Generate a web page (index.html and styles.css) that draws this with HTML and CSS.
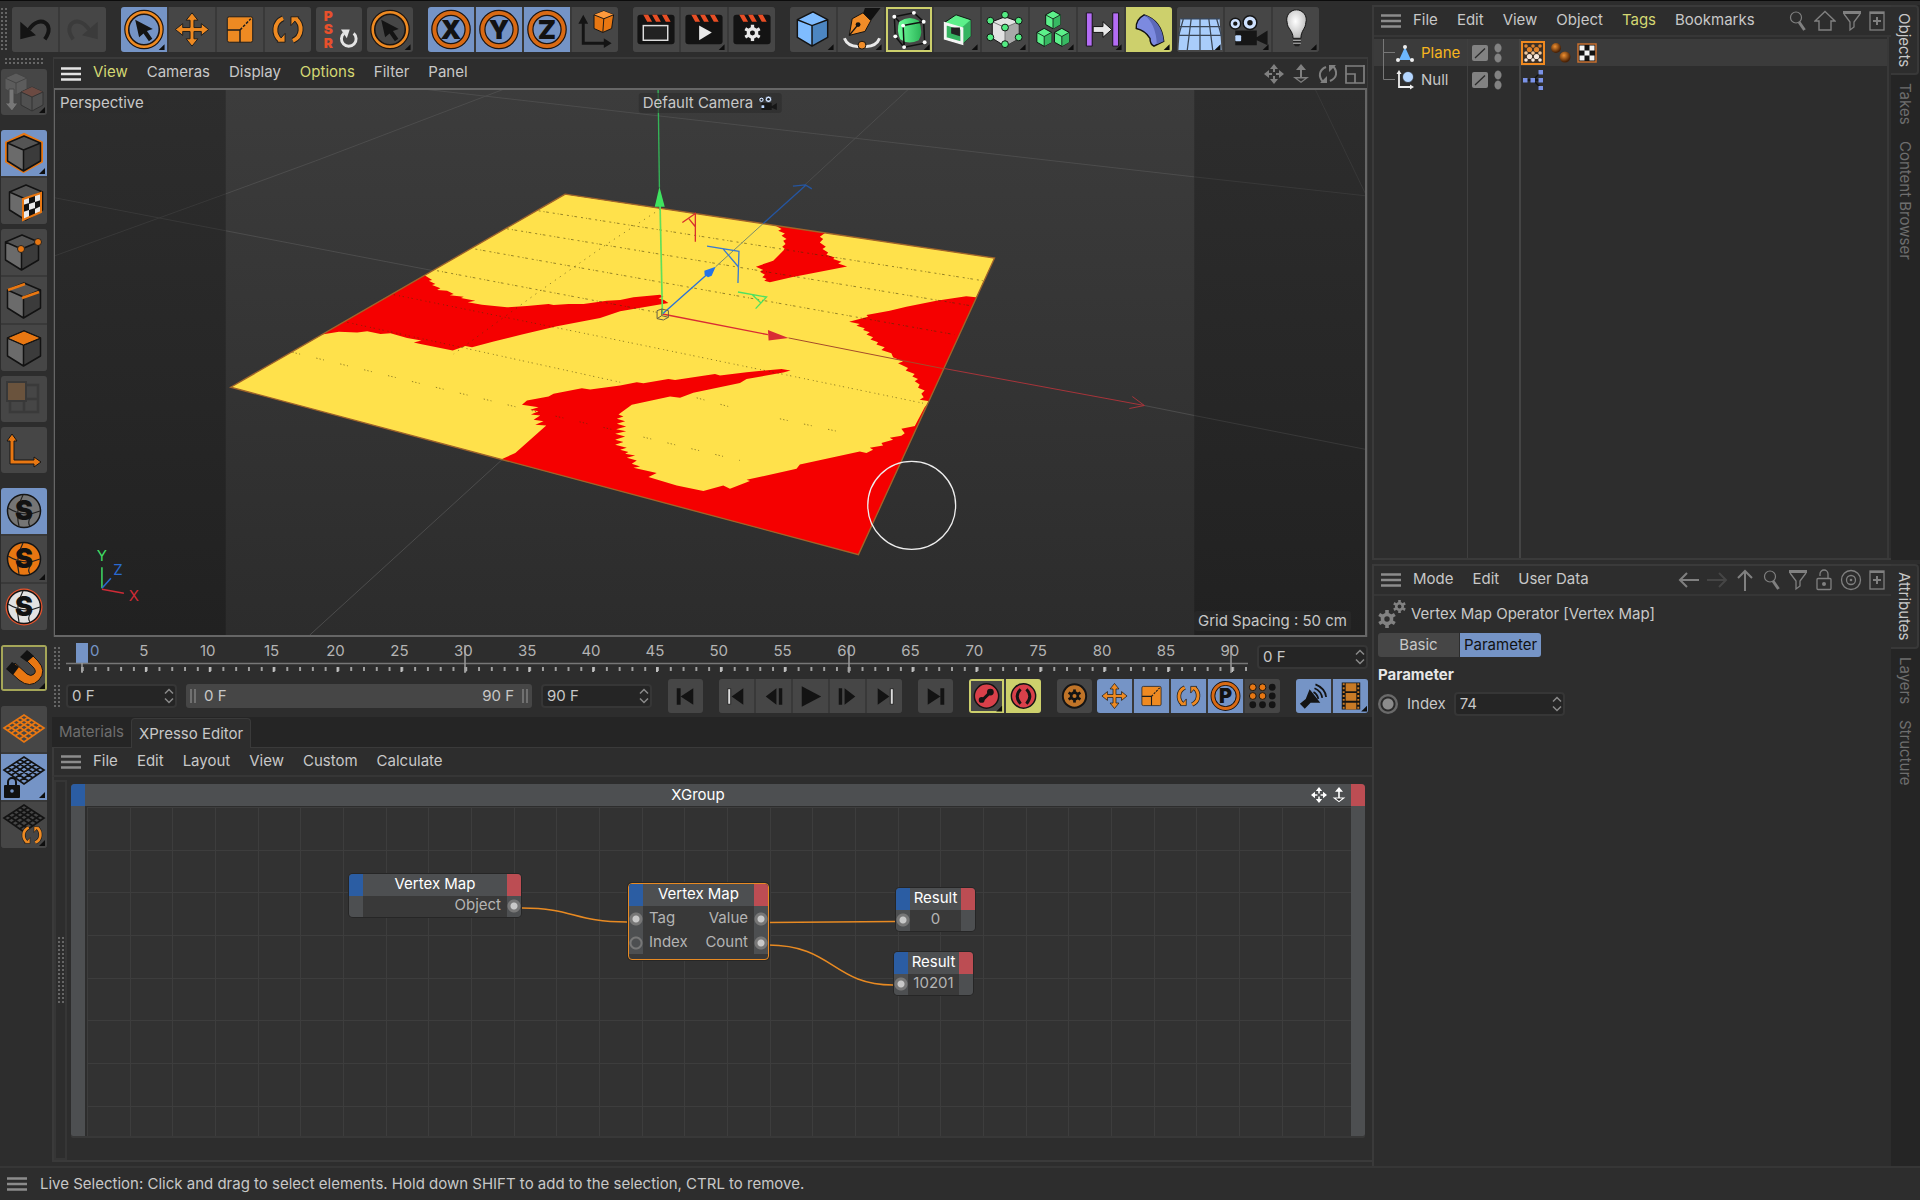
FILE: index.html
```html
<!DOCTYPE html>
<html lang="en">
<head>
<meta charset="utf-8">
<title>XPresso Editor</title>
<link rel="stylesheet" href="styles.css">
</head>
<body>
<svg class="defs" aria-hidden="true">
  <defs>
    <linearGradient id="gMid" x1="0" y1="0" x2="0" y2="1"><stop offset="0" stop-color="#3c3c3c"/><stop offset="1" stop-color="#2c2c2c"/></linearGradient>
    <linearGradient id="gSide" x1="0" y1="0" x2="0" y2="1"><stop offset="0" stop-color="#2d2d2d"/><stop offset="1" stop-color="#212121"/></linearGradient>
    <radialGradient id="gBall" cx=".4" cy=".35" r=".6"><stop offset="0" stop-color="#f09030"/><stop offset="1" stop-color="#4a2206"/></radialGradient>
    <radialGradient id="gBulb" cx=".45" cy=".4" r=".6"><stop offset="0" stop-color="#fff"/><stop offset="1" stop-color="#bbb"/></radialGradient>
    <linearGradient id="gGreen"><stop offset="0" stop-color="#6fff9c"/><stop offset="1" stop-color="#2cb558"/></linearGradient>
  </defs>
  <symbol id="burger" viewBox="0 0 20 14"><path d="M0 1.500h20M0 7h20M0 12.500h20" stroke="currentColor" stroke-width="2.600"/></symbol>
  <symbol id="corner" viewBox="0 0 46 46"><path d="M44 38v6h-6z" fill="#0e0e0e"/></symbol>
  <symbol id="spin" viewBox="0 0 10 16"><path d="M1 5.500L5 1.500L9 5.500M1 10.500L5 14.500L9 10.500" fill="none" stroke="#8a8a8a" stroke-width="1.500"/></symbol>
  <symbol id="ring" viewBox="0 0 46 46"><circle cx="23" cy="23" r="17.500" fill="none" stroke="#1c1410" stroke-width="5.400"/><circle cx="23" cy="23" r="17.700" fill="none" stroke="#ee8a22" stroke-width="2.600"/></symbol>
  <symbol id="ring2" viewBox="0 0 46 46"><circle cx="23" cy="23" r="17" fill="none" stroke="#1c1410" stroke-width="6.500"/><circle cx="23" cy="23" r="17" fill="none" stroke="#d96a14" stroke-width="4"/></symbol>
  <symbol id="pointer" viewBox="0 0 46 46"><path d="M14 13L32 22.500L26 24.500L31.500 32.500L28 35L22.500 27L18 31z" fill="#141414"/></symbol>
  <symbol id="move" viewBox="0 0 46 46"><path d="M23 6L29 13.500H25V21H32.500V17L40 23L32.500 29V25H25V32.500H29L23 40L17 32.500H21V25H13.500V29L6 23L13.500 17V21H21V13.500H17z" fill="#ee8a22" stroke="#1d1d1d"/></symbol>
  <symbol id="scale" viewBox="0 0 46 46"><rect x="10" y="10" width="26" height="26" rx="2" fill="#ee8a22" stroke="#1d1d1d"/><path d="M10 23.500h13V36" fill="none" stroke="#1d1d1d" stroke-width="1.500"/><path d="M23 23.500L34 12" stroke="#1d1d1d" stroke-width="1.500" stroke-dasharray="3 1.500"/></symbol>
  <symbol id="rotate" viewBox="0 0 46 46"><path d="M15 34C8 28 8 16 18 11.500M31 12C38 18 38 30 28 34.500" fill="none" stroke="#1d1d1d" stroke-width="6"/><path d="M12 36H20V27zM34 10H26V19z" fill="#ee8a22" stroke="#1d1d1d"/><path d="M15 34C8 28 8 16 18 11.500M31 12C38 18 38 30 28 34.500" fill="none" stroke="#ee8a22" stroke-width="4"/></symbol>
  <symbol id="cube" viewBox="0 0 46 46"><path d="M6.500 13L22.500 20V41L6.500 31z" fill="#6b6b6b"/><path d="M22.500 20L39.500 13V31L22.500 41z" fill="#3b3b3b"/><path d="M6.500 13L23 6L39.500 13L22.500 20z" fill="#545454"/><path d="M6.500 13L23 6L39.500 13V31L22.500 41L6.500 31zM6.500 13L22.500 20L39.500 13M22.500 20V41" fill="none" stroke="#121212" stroke-width="1.500" stroke-linejoin="round"/></symbol>
  <symbol id="gcube" viewBox="0 0 20 24"><path d="M1 6L10 1L19 6V18L10 23L1 18z" fill="#5cf08a" stroke="#111" stroke-width="1.200"/><path d="M10 11L19 6V18L10 23z" fill="#37b862"/><path d="M1 6L10 11L19 6M10 11V23" stroke="#111" fill="none"/></symbol>
  <symbol id="clap" viewBox="0 0 46 46"><rect x="4" y="8" width="38" height="30" rx="3" fill="#131313"/><path d="M10 8h5l4 7h-5zM19 8h5l4 7h-5zM29 8h5l4 7h-5z" fill="#e84e25"/></symbol>
  <symbol id="ball" viewBox="0 0 46 46"><circle cx="23" cy="23" r="16.500" fill="currentColor" stroke="#151515" stroke-width="1.500"/><path d="M7 20Q23 30 39 23M22 7Q14 22 18 38M30 29Q26 34 29 38" fill="none" stroke="#222" stroke-width="1.200"/></symbol>
  <symbol id="mesh" viewBox="0 0 46 32"><path d="M2 15L22 2L42 15L22 29zM6 12.500L26.500 26M10.500 9.500L31 23M14.500 7L35 20M18 4.500L38.500 17.500M38 12.500L17.500 26M33.500 9.500L13 23M29.500 7L9.500 20M26 4.500L5.500 17.500" fill="none" stroke="currentColor" stroke-width="1.700"/></symbol>
  <symbol id="first" viewBox="0 0 36 34"><path d="M9 9h4v17H9zM26 9v17L13 17.500z" fill="#131313"/></symbol>
  <symbol id="keyprev" viewBox="0 0 36 34"><path d="M25 9v17L13 17.500z" fill="#131313"/><path d="M9 9.500h3v16H9z" fill="#ddd" stroke="#131313" stroke-width=".8"/></symbol>
  <symbol id="stepprev" viewBox="0 0 36 34"><path d="M21 9v17L10 17.500zM23.500 9h3.500v17h-3.500z" fill="#131313"/></symbol>
  <symbol id="m-move" viewBox="0 0 20 20"><path d="M10 0l4 5H6zM10 20l4-5H6zM0 10l5-4v8zM20 10l-5-4v8zM9 5h2v3H9zM9 12h2v3H9zM5 9h3v2H5zM12 9h3v2h-3z" fill="currentColor"/></symbol>
  <symbol id="m-dolly" viewBox="0 0 20 20"><path d="M10 0l5 6h-4v7h7l-8 6l-8-6h7V6H5z" fill="currentColor"/><path d="M6 14.500h8l-4 3z" fill="#2d2d2d"/></symbol>
  <symbol id="search" viewBox="0 0 20 22"><circle cx="8" cy="7.500" r="5.500" fill="none" stroke="currentColor" stroke-width="1.200"/><path d="M11 12L16.500 20" stroke="currentColor" stroke-width="3"/></symbol>
  <symbol id="funnel" viewBox="0 0 20 22"><path d="M1 2.500h18" stroke="currentColor" stroke-width="3"/><path d="M2 4l6 8v8l4-3v-5l6-8" fill="none" stroke="currentColor" stroke-width="1.300"/></symbol>
  <symbol id="plus" viewBox="0 0 18 22"><rect x="2" y="2" width="14" height="18" fill="none" stroke="currentColor" stroke-width="1.300"/><path d="M9 7v8M5 11h8M2 3h14" stroke="currentColor" stroke-width="2"/></symbol>
  <symbol id="slot" viewBox="0 0 16 16"><rect width="16" height="16" rx="2" fill="#828282"/><path d="M3 13L13 3.500" stroke="#2a2a2a" stroke-width="1.300"/></symbol>
  <symbol id="gear" viewBox="0 0 20 20"><circle cx="10" cy="10" r="5" fill="none" stroke="currentColor" stroke-width="4"/><path d="M10 0v4M10 16v4M1.300 5l3.500 2M15.200 13l3.500 2M1.300 15l3.500-2M15.200 7l3.500-2" stroke="currentColor" stroke-width="4"/></symbol>
  <symbol id="camera" viewBox="0 0 46 46"><path d="M10 24h22v15H10zM32 31l11-7v15l-11-5z" fill="#161616"/><circle cx="10" cy="17" r="5.500" fill="#cfe2ff" stroke="#161616" stroke-width="1.500"/><circle cx="25" cy="16" r="7" fill="#cfe2ff" stroke="#161616" stroke-width="1.500"/><circle cx="10" cy="17" r="2.200" fill="#161616"/><circle cx="25" cy="16" r="2.800" fill="#161616"/><rect x="10" y="29" width="6" height="6" rx="1" fill="#bcd8ff"/></symbol>
</svg>

<div class="app">
 <div class="work">
  <div class="left">
   <header class="toolbar">
    <i class="grip grip-v"></i>
    <div class="group">
     <button class="tool" aria-label="Undo"><svg viewBox="0 0 46 46"><path d="M33 33C45 17 27 7 17 23" fill="none" stroke="#141414" stroke-width="4"/><path d="M8 15V33L24 29z" fill="#141414"/></svg></button>
     <button class="tool" aria-label="Redo"><svg viewBox="0 0 46 46"><path d="M13 33C1 17 19 7 29 23" fill="none" stroke="#3b3b3b" stroke-width="4"/><path d="M38 15V33L22 29z" fill="#3b3b3b"/></svg></button>
    </div>
    <div class="group far">
     <button class="tool on" aria-label="Live Selection"><svg viewBox="0 0 46 46"><use href="#ring"/><use href="#pointer"/><use href="#corner"/></svg></button>
     <button class="tool" aria-label="Move"><svg viewBox="0 0 46 46"><use href="#move"/></svg></button>
     <button class="tool" aria-label="Scale"><svg viewBox="0 0 46 46"><use href="#scale"/></svg></button>
     <button class="tool" aria-label="Rotate"><svg viewBox="0 0 46 46"><use href="#rotate"/></svg></button>
    </div>
    <div class="group">
     <button class="tool" aria-label="Reset PSR"><svg viewBox="0 0 46 46"><g class="psr"><text x="12" y="14">P</text><text x="12" y="28">S</text><text x="12" y="42">R</text></g><path d="M28 27A7.500 7.500 0 1 0 38 27" fill="none" stroke="#e4e4e4" stroke-width="3"/><path d="M25 23h9l-3 9z" fill="#e4e4e4"/></svg></button>
    </div>
    <div class="group">
     <button class="tool" aria-label="Recent tool"><svg viewBox="0 0 46 46"><use href="#ring"/><use href="#pointer"/><use href="#corner"/></svg></button>
    </div>
    <div class="group far">
     <button class="tool on" aria-label="X axis"><svg viewBox="0 0 46 46"><use href="#ring2"/><text class="axis" x="23" y="33">X</text></svg></button>
     <button class="tool on" aria-label="Y axis"><svg viewBox="0 0 46 46"><use href="#ring2"/><text class="axis" x="23" y="33">Y</text></svg></button>
     <button class="tool on" aria-label="Z axis"><svg viewBox="0 0 46 46"><use href="#ring2"/><text class="axis" x="23" y="33">Z</text></svg></button>
     <button class="tool" aria-label="Coordinate system"><svg viewBox="0 0 46 46"><path d="M11 15V37H33" fill="none" stroke="#141414" stroke-width="3"/><path d="M6 17L11 8L16 17zM32 32L40 37L32 42z" fill="#141414"/><path d="M22 8L32 4L42 8L40 22L31 26L22 22z" fill="#e87712" stroke="#141414"/><path d="M22 8L32 4L42 8L32 12z" fill="#ff9a3c"/><path d="M22 8L32 12L42 8M32 12L31 26" fill="none" stroke="#141414"/></svg></button>
    </div>
    <div class="group far">
     <button class="tool" aria-label="Render view"><svg viewBox="0 0 46 46"><use href="#clap"/><rect x="10" y="19" width="25" height="15" fill="#222" stroke="#ddd" stroke-width="1.500"/></svg></button>
     <button class="tool" aria-label="Render to picture viewer"><svg viewBox="0 0 46 46"><use href="#clap"/><path d="M18 19L31 26L18 34z" fill="#e8e8e8"/><use href="#corner"/></svg></button>
     <button class="tool" aria-label="Render settings"><svg viewBox="0 0 46 46"><use href="#clap"/><use class="lit" href="#gear" x="15" y="18" width="17" height="17"/></svg></button>
    </div>
    <div class="group far">
     <button class="tool" aria-label="Cube"><svg viewBox="0 0 46 46"><path d="M7 13L23 5L38 13V31L22 40L7 31z" fill="#7fbcff"/><path d="M22 19L38 13V31L22 40z" fill="#4c86c2"/><path d="M7 13L23 5L38 13V31L22 40L7 31zM7 13L22 19L38 13M22 19V40" fill="none" stroke="#131313" stroke-width="1.500"/><use href="#corner"/></svg></button>
     <button class="tool" aria-label="Pen"><svg viewBox="0 0 46 46"><path d="M27 1H43L33 14L25 7z" fill="#111"/><path d="M11 29L14 12L25 6L33 14L27 25z" fill="#f08c28" stroke="#111"/><circle cx="20" cy="18" r="2.500" fill="#111"/><path d="M11 29L20 18" stroke="#111" stroke-width="1.500"/><path d="M6 32Q10 42 24 40Q38 42 42 32" fill="none" stroke="#e8e8e8" stroke-width="3"/><circle cx="24" cy="39" r="4" fill="#f08c28" stroke="#111"/><use href="#corner"/></svg></button>
     <button class="tool outlined" aria-label="Subdivision surface"><svg viewBox="0 0 46 46"><path d="M8 10L28 6L38 15L39 37L18 41L9 30zM8 10L17 19L38 15M17 19L18 41" fill="none" stroke="#111" stroke-width="1.500"/><path d="M13 15Q23 8 33 14Q38 26 33 34Q22 39 14 33Q10 24 13 15z" fill="url(#gGreen)"/><path d="M17 19L18 41M17 19L38 15" stroke="#111" stroke-width="1.500"/><g fill="#fff"><circle cx="8" cy="10" r="2"/><circle cx="28" cy="6" r="2"/><circle cx="17" cy="19" r="2"/><circle cx="38" cy="15" r="2"/><circle cx="39" cy="36" r="2"/><circle cx="18" cy="41" r="2"/><circle cx="9" cy="30" r="2"/></g><use href="#corner"/></svg></button>
     <button class="tool" aria-label="Extrude"><svg viewBox="0 0 46 46"><path d="M10 16L22 8L37 13V30L28 38L10 33z" fill="#5cf08a" stroke="#111"/><path d="M28 21L37 13V30L28 38z" fill="#35b360"/><path d="M11 17L28 22V37L11 32z" fill="#35b360" stroke="#f4f4f4" stroke-width="3"/><path d="M17 21h9v9l-9-3z" fill="#222"/><use href="#corner"/></svg></button>
     <button class="tool" aria-label="Cloner"><svg viewBox="0 0 46 46"><path d="M10 15L23 10L37 15V32L23 40L10 32z" fill="#e2e2e2" stroke="#111"/><path d="M23 21L37 15V32L23 40z" fill="#a9a9a9"/><path d="M10 15L23 21L37 15M23 21V40" fill="none" stroke="#777"/><g fill="#53ec83" stroke="#111"><circle cx="23" cy="8" r="3.500"/><circle cx="8" cy="14" r="3.500"/><circle cx="37" cy="14" r="3.500"/><circle cx="23" cy="21" r="3.500"/><circle cx="8" cy="31" r="3.500"/><circle cx="37" cy="31" r="3.500"/><circle cx="23" cy="38" r="3.500"/></g><use href="#corner"/></svg></button>
     <button class="tool" aria-label="Array"><svg viewBox="0 0 46 46"><use href="#gcube" x="14" y="3" width="18" height="20"/><use href="#gcube" x="5" y="21" width="18" height="20"/><use href="#gcube" x="23" y="21" width="18" height="20"/><use href="#corner"/></svg></button>
     <button class="tool" aria-label="Spacing"><svg viewBox="0 0 46 46"><path d="M8 6h6v34H8zM35 6h6v34h-6z" fill="#b46cf5" stroke="#111"/><path d="M15 20h10v-5l9 8l-9 8v-5H15z" fill="#e8e8e8" stroke="#111"/><use href="#corner"/></svg></button>
     <button class="tool yellow" aria-label="Bend"><svg viewBox="0 0 46 46"><path d="M10 22Q9 13 18 8Q36 14 38 35L28 40Q24 38 24 32Q19 24 10 22z" fill="#7c8ae0" stroke="#111" stroke-width="1.500"/><path d="M18 8Q30 17 31 38L38 35Q36 14 18 8z" fill="#5c69b8"/><use href="#corner"/></svg></button>
    </div>
    <div class="group">
     <button class="tool" aria-label="Floor"><svg viewBox="0 0 46 46"><path d="M3 12H43L45 44H1z" fill="#a9cdfb"/><path d="M3 12H43M2 20H44M2 29H44M23 12V44M14 12L10 44M32 12L36 44M6 12L1 30M40 12L45 30" stroke="#3a4656" stroke-width="1.300"/><use href="#corner"/></svg></button>
     <button class="tool" aria-label="Camera"><svg viewBox="0 0 46 46"><use href="#camera"/><use href="#corner"/></svg></button>
     <button class="tool" aria-label="Light"><svg viewBox="0 0 46 46"><path d="M14 16A10 10 0 1 1 33 16C33 22 28 24 28 32H20C20 24 14 22 14 16z" fill="url(#gBulb)" stroke="#111"/><path d="M20 33h8v4l-2 3h-4l-2-3z" fill="#222"/><path d="M20 34h8M20 37h8" stroke="#ccc"/><use href="#corner"/></svg></button>
    </div>
   </header>

   <div class="stage">
    <nav class="rail" aria-label="Modes">
     <i class="grip grip-h"></i>
     <div class="col"><button class="tool" aria-label="Make editable"><svg viewBox="0 0 46 46"><path d="M4 9L15 4L26 9V20L15 26L4 20z" fill="#5c5c5c" stroke="#444"/><path d="M4 9L15 14L26 9M15 14V26" fill="none" stroke="#444"/><path d="M20 23L31 18L42 23V36L31 42L20 36z" fill="#505050" stroke="#333"/><path d="M20 23L31 18L42 23L31 28z" fill="#6b4a42"/><path d="M31 28V42M20 23L31 28L42 23" fill="none" stroke="#333"/><path d="M8 20h5v14h4l-6 8l-7-8h4z" fill="#777" stroke="#444"/><use href="#corner"/></svg></button></div>
     <div class="col far">
      <button class="tool on" aria-label="Model"><svg viewBox="0 0 46 46"><path d="M6 13L23 5L40 13V31L22.500 41L6 31z" fill="none" stroke="#e87712" stroke-width="4"/><use href="#cube"/><use href="#corner"/></svg></button>
      <button class="tool" aria-label="Texture"><svg viewBox="0 0 46 46"><use href="#cube" x="2" y="1"/><path d="M22 21L40 15V34L22 42z" fill="#e9e9e9"/><path d="M28 19l6-2v7l-6 2zM22 27l6-2v7l-6 2zM34 24l6-2v6l-6 3zM28 32l6-2v7l-6 2z" fill="#111"/><path d="M22 21L40 15V34L22 42z" fill="none" stroke="#e87712" stroke-width="2"/></svg></button>
     </div>
     <div class="col">
      <button class="tool" aria-label="Points"><svg viewBox="0 0 46 46"><use href="#cube" x="-2"/><g fill="#e87712" stroke="#222"><circle cx="20" cy="20" r="3.500"/><circle cx="37" cy="13" r="3.500"/></g></svg></button>
      <button class="tool" aria-label="Edges"><svg viewBox="0 0 46 46"><use href="#cube"/><path d="M7 13L24 7M21 21L38 15" stroke="#e87712" stroke-width="2.500"/></svg></button>
      <button class="tool" aria-label="Polygons"><svg viewBox="0 0 46 46"><use href="#cube"/><path d="M6.500 13L23 6L39.500 13L22.500 20z" fill="#e87712" stroke="#111"/></svg></button>
     </div>
     <div class="col"><button class="tool" aria-label="UV polygons"><svg viewBox="0 0 46 46"><path d="M9 9H37V36H9zM23 9V36M9 23H37" fill="none" stroke="#3a3a3a" stroke-width="2.500"/><rect x="6" y="6" width="19" height="19" fill="#6a533d" stroke="#383838" stroke-width="2"/></svg></button></div>
     <div class="col"><button class="tool" aria-label="Enable axis"><svg viewBox="0 0 46 46"><path d="M11 7L16 14H13V33H33V30L40 35L33 40V37H9V14H6z" fill="#e87712" stroke="#161616"/></svg></button></div>
     <div class="col far">
      <button class="tool on" aria-label="Solo off"><svg class="s-grey" viewBox="0 0 46 46"><use href="#ball"/><text class="axis" x="23" y="32">S</text></svg></button>
      <button class="tool" aria-label="Solo single"><svg class="s-orange" viewBox="0 0 46 46"><use href="#ball"/><text class="axis" x="23" y="32">S</text><use href="#corner"/></svg></button>
      <button class="tool" aria-label="Solo hierarchy"><svg class="s-white" viewBox="0 0 46 46"><circle cx="23" cy="23" r="18.500" fill="#e8532c"/><use href="#ball"/><text class="axis" x="23" y="32">S</text></svg></button>
     </div>
     <div class="col far"><button class="tool outlined dimmed" aria-label="Snap"><svg viewBox="0 0 46 46"><path d="M14 18L26 29Q30 32 33 29Q36 26 32 22L22 12L28 7L37 16Q46 26 38 35Q29 44 18 35L7 25z" fill="#e87712" stroke="#161616"/><path d="M19 12L26 5L33 11L26 17zM5 24L11 17L18 22L12 30z" fill="#121212"/><use href="#corner"/></svg></button></div>
     <div class="col far">
      <button class="tool" aria-label="Workplane"><svg class="s-orange" viewBox="0 0 46 46"><use href="#mesh" x="1" y="7" width="46" height="32"/></svg></button>
      <button class="tool on" aria-label="Lock workplane"><svg class="s-black" viewBox="0 0 46 46"><use href="#mesh" x="1" y="1" width="46" height="32"/><rect x="3" y="31" width="16" height="13" rx="1" fill="#111"/><path d="M7 31v-3a4 4 0 0 1 8 0v3" fill="none" stroke="#111" stroke-width="2"/><circle cx="11" cy="37" r="1.800" fill="#7594c6"/><use href="#corner"/></svg></button>
      <button class="tool" aria-label="Planar workplane"><svg class="s-black" viewBox="0 0 46 46"><use href="#mesh" x="1" y="1" width="46" height="32"/><use href="#rotate" x="16" y="18" width="30" height="30"/><use href="#corner"/></svg></button>
     </div>
    </nav>

    <main class="center">
     <section class="view">
      <div class="menubar view-menu">
       <button class="menu-btn bright" aria-label="Menu"><svg class="burger"><use href="#burger"/></svg></button>
       <button class="mi hot">View</button><button class="mi">Cameras</button><button class="mi">Display</button><button class="mi hot">Options</button><button class="mi">Filter</button><button class="mi">Panel</button>
       <div class="tools-right view-nav">
        <button class="mini" aria-label="Pan"><svg width="20" height="20"><use href="#m-move"/></svg></button>
        <button class="mini" aria-label="Dolly"><svg width="20" height="20"><use href="#m-dolly"/></svg></button>
        <button class="mini" aria-label="Orbit"><svg width="20" height="20" viewBox="0 0 20 20"><path d="M5 18C0 12 1 6 8 3M15 2C20 8 19 14 12 17" fill="none" stroke="currentColor" stroke-width="2"/><path d="M2 19h7v-7zM18 1h-7v7z" fill="currentColor"/></svg></button>
        <button class="mini" aria-label="Toggle view"><svg width="20" height="20" viewBox="0 0 20 20"><path d="M1 2h18M1 1v18h18V1M1 10h9v9" fill="none" stroke="currentColor" stroke-width="1.700"/></svg></button>
       </div>
      </div>
      <div class="viewport">
       <svg class="scene" viewBox="54 89 1312 546" preserveAspectRatio="xMidYMid slice" role="img" aria-label="Perspective view of the plane">
        <rect x="54" y="89" width="1312" height="546" fill="url(#gMid)"/>
        <path d="M54 89H225V635H54zM1195 89H1368V635H1195z" fill="url(#gSide)"/>
        <g stroke="#4c4c4c" fill="none">
         <path d="M225 230L433 270M225 193L315 160L504 88M422 88L1195 176M909 88L805 184M502 459L309 635M1145 405L1195 415"/>
         <path d="M54 197L225 230M54 255L225 193M1195 176L1367 195M1316 88L1367 194M1195 415L1367 449" stroke="#383838"/>
        </g>
        <g transform="translate(220 160) scale(.333333)">
         <clipPath id="pl"><path d="M1035 100L30 680L1916 1183L2325 292z"/></clipPath>
         <g clip-path="url(#pl)">
          <path d="M1035 100L30 680L1916 1183L2325 292z" fill="#ffe14b"/>
          <g fill="#f50000">
           <path d="M560 330L615 345L635 358L625 360L645 370L635 373L660 383L650 388L680 390L700 400L688 404L730 408L722 412L765 420L742 425L785 432L860 440L920 436L985 430L1000 433L1045 430L1090 430L1160 420L1200 418L1240 410L1320 402L1330 408L1315 413L1332 418L1345 427L1200 452L1140 472L1010 497L905 522L820 543L755 560L735 556L697 570L600 550L580 546L603 540L560 532L510 518L480 520L440 512L410 516L355 513L290 524z"/>
           <path d="M1640 180L1685 205L1675 210L1695 218L1685 225L1700 235L1690 240L1697 250L1687 258L1695 265L1660 300L1608 318L1630 328L1620 333L1635 342L1627 350L1640 355L1633 360L1650 365L1715 350L1882 317L1855 308L1865 303L1840 295L1845 290L1820 282L1825 275L1808 265L1818 258L1800 245L1810 235L1800 228L1820 214z"/>
           <path d="M1888 483L1945 468L1940 463L2010 450L2060 438L2150 420L2240 407L2290 412L2120 800L2085 797L2115 740L2130 722L2100 718L2112 710L2105 700L2115 690L2095 682L2100 672L2085 662L2095 655L2078 648L2085 640L2058 630L2065 622L2035 608L2050 603L2020 590L2015 578L1985 568L1995 560L1970 552L1975 545L1952 537L1960 530L1940 522L1950 515L1930 508L1935 503L1910 495L1920 490z"/>
           <path d="M835 900L885 878L978 795L945 793L970 782L940 778L960 765L932 762L955 752L930 748L955 740L905 733L920 720L985 708L1000 700L1085 683L1110 687L1200 675L1250 665L1270 668L1345 655L1365 658L1485 640L1500 645L1580 635L1685 625L1712 630L1690 636L1580 655L1560 667L1420 697L1380 712L1350 708L1235 733L1195 762L1210 768L1190 775L1215 782L1190 790L1218 798L1188 806L1218 812L1185 820L1215 828L1185 838L1210 845L1185 853L1220 862L1200 868L1225 875L1215 880L1245 885L1220 892L1250 900L1235 910L1260 918L1240 922L1310 938L1285 950L1370 975L1450 992L1510 975L1530 985L1590 962L1580 958L1700 932L1730 925L1740 912L1920 873L1940 878L1960 868L1950 862L1990 855L1985 848L2020 838L2010 832L2045 826L2055 818L2045 805L2120 790L1930 1240L1200 1030z"/>
          </g>
          <g fill="none" stroke="#3c3408" stroke-opacity=".55" stroke-width="3">
           <path d="M955 150L2290 360M860 204L2258 436M765 265L2205 522M650 330L1310 455" stroke-dasharray="6 9 3 5 8 12"/>
           <path d="M520 402L1200 540L2110 728M380 485L1200 665" stroke-dasharray="4 12 3 8"/>
           <path d="M215 575L870 735L1180 808M1270 830L1560 900M1680 775L1850 812M1430 712L1540 742" stroke-dasharray="4 6 4 7 3 50"/>
           <path d="M1320 145L1160 250L960 390L700 580" stroke-opacity=".5" stroke-dasharray="4 14"/>
          </g>
         </g>
         <path d="M1035 100L30 680L1916 1183L2325 292z" fill="none" stroke="#a0642a" stroke-width="4"/>
         <path d="M1327 460L1644 522" stroke="#d92c34" stroke-width="4"/><path d="M1644 508L1706 532L1646 540z" fill="#d92c34"/>
         <path d="M1706 532L2175 625" stroke="#a54a2a" stroke-width="3"/>
         <path d="M1327 460L1460 342" stroke="#2a72d8" stroke-width="4"/><path d="M1453 330L1487 318L1475 345L1464 350L1454 343z" fill="#2473e8"/>
         <path d="M1487 318L1630 188" stroke="#7a8c6a" stroke-width="3"/><path d="M1630 188L1757 74M1719 76L1757 72L1776 84" fill="none" stroke="#2555a0" stroke-width="4"/>
         <path d="M1327 460L1320 135" stroke="#5fe05a" stroke-width="5"/><path d="M1304 138L1318 78L1334 138z" fill="#3fe35f"/><path d="M1318 80L1314 -220" stroke="#35b558" stroke-width="4"/>
         <path d="M1311 450L1325 445L1345 450V470L1330 478L1311 474zM1325 445V465L1311 474M1325 465L1345 470" fill="none" stroke="#666045" stroke-width="3"/>
         <path d="M1426 243V158L1387 185M1426 198L1407 174" fill="none" stroke="#d8302c" stroke-width="4"/>
         <path d="M1554 367L1557 272L1461 256M1510 265L1555 318" fill="none" stroke="#3a7ad0" stroke-width="4"/>
         <path d="M1554 394L1640 409L1607 444M1597 402L1624 428" fill="none" stroke="#4fe060" stroke-width="4"/>
        </g>
        <path d="M945 368L1145 405M1133 396L1145 405L1130 408" fill="none" stroke="#a8343a"/>
        <circle cx="912" cy="505" r="44" fill="none" stroke="#eee" stroke-width="1.300"/>
        <g class="gizmo" fill="none"><path d="M101 588V567" stroke="#3fdc63" stroke-width="1.500"/><path d="M101 588L110 578" stroke="#2a6ad0" stroke-width="1.500"/><path d="M101 589L123 593" stroke="#cf2b36" stroke-width="1.500"/><text x="101" y="561" fill="#3fdc63">Y</text><text x="117" y="575" fill="#2a6ad0">Z</text><text x="133" y="601" fill="#cf2b36">X</text></g>
       </svg>
       <span class="tag tag-left">Perspective</span>
       <span class="tag tag-mid">Default Camera <svg width="20" height="18" viewBox="2 7 43 34"><use href="#camera" width="46" height="46"/></svg></span>
       <span class="tag tag-br">Grid Spacing : 50 cm</span>
      </div>
     </section>

     <section class="timeline">
      <i class="grip grip-v short"></i>
      <div class="ruler">
       <div class="labels"><span class="now">0</span><span>5</span><span>10</span><span>15</span><span>20</span><span>25</span><span>30</span><span>35</span><span>40</span><span>45</span><span>50</span><span>55</span><span>60</span><span>65</span><span>70</span><span>75</span><span>80</span><span>85</span><span>90</span></div>
       <svg class="ticks" viewBox="0 0 1182 36" preserveAspectRatio="none">
        <path d="M10 6h12v20H10z" fill="#7594c6"/>
        <path d="M0 26.500H1182" stroke="#777" stroke-width="1.500"/>
        <path d="M3 32H1181" pathLength="1198" stroke="#a0a0a0" stroke-width="4" stroke-dasharray="2 11"/>
        <path d="M15 32.500H1167" pathLength="1172" stroke="#c0c0c0" stroke-width="5" stroke-dasharray="2 63"/>
        <path d="M16 26V36M399 8V36M783 8V36M1165 8V36" stroke="#999" stroke-width="1.500"/>
       </svg>
      </div>
      <label class="num cur"><input type="text" value="0 F" aria-label="Current frame"><svg class="spin"><use href="#spin"/></svg></label>
     </section>

     <section class="playback">
      <i class="grip grip-v short"></i>
      <label class="num"><input type="text" value="0 F" aria-label="Start frame"><svg class="spin"><use href="#spin"/></svg></label>
      <div class="range"><i class="bars"></i><input type="text" value="0 F" aria-label="Preview start"><input class="end" type="text" value="90 F" aria-label="Preview end"><i class="bars"></i></div>
      <label class="num"><input type="text" value="90 F" aria-label="End frame"><svg class="spin"><use href="#spin"/></svg></label>
      <div class="pgroup far"><button class="pb" aria-label="Go to start"><svg viewBox="0 0 36 34"><use href="#first"/></svg></button></div>
      <div class="pgroup far">
       <button class="pb" aria-label="Previous key"><svg viewBox="0 0 36 34"><use href="#keyprev"/></svg></button>
       <button class="pb" aria-label="Previous frame"><svg viewBox="0 0 36 34"><use href="#stepprev"/></svg></button>
       <button class="pb" aria-label="Play"><svg viewBox="0 0 36 34"><path d="M9 7L29 17.500L9 28z" fill="#131313"/></svg></button>
       <button class="pb flip" aria-label="Next frame"><svg viewBox="0 0 36 34"><use href="#stepprev"/></svg></button>
       <button class="pb flip" aria-label="Next key"><svg viewBox="0 0 36 34"><use href="#keyprev"/></svg></button>
      </div>
      <div class="pgroup far"><button class="pb flip" aria-label="Go to end"><svg viewBox="0 0 36 34"><use href="#first"/></svg></button></div>
      <div class="pgroup far">
       <button class="pb outlined" aria-label="Record"><svg viewBox="0 0 36 34"><circle cx="18" cy="17" r="12.500" fill="#d9404a" stroke="#141414" stroke-width="1.500"/><path d="M14 21L22 13" stroke="#141414" stroke-width="3"/><circle cx="22" cy="13" r="3.500" fill="#141414"/><circle cx="13" cy="21" r="3" fill="#141414"/><path d="M34 27v6h-6z" fill="#0e0e0e"/></svg></button>
       <button class="pb yellow" aria-label="Autokey"><svg viewBox="0 0 36 34"><circle cx="18" cy="17" r="12.500" fill="#d9404a" stroke="#141414" stroke-width="1.500"/><path d="M15 10Q8 17 15 25M21 10Q28 17 21 25" fill="none" stroke="#141414" stroke-width="3"/></svg></button>
      </div>
      <div class="pgroup far"><button class="pb" aria-label="Key options"><svg class="s-black" viewBox="0 0 36 34"><circle cx="18" cy="17" r="12" fill="#c07428" stroke="#141414" stroke-width="2"/><use href="#gear" x="11" y="10" width="14" height="14"/></svg></button></div>
      <div class="pgroup">
       <button class="pb on" aria-label="Position keys"><svg viewBox="0 0 46 46"><use href="#move"/></svg></button>
       <button class="pb on" aria-label="Scale keys"><svg viewBox="0 0 46 46"><use href="#scale"/></svg></button>
       <button class="pb on" aria-label="Rotation keys"><svg viewBox="0 0 46 46"><use href="#rotate"/></svg></button>
       <button class="pb on" aria-label="Parameter keys"><svg viewBox="0 0 46 46"><use href="#ring2"/><text class="axis" x="23" y="32">P</text></svg></button>
       <button class="pb" aria-label="Point keys"><svg viewBox="0 0 36 34"><g fill="#141414"><circle cx="28" cy="8" r="3.500"/><circle cx="28" cy="17" r="3.500"/><circle cx="8" cy="26" r="3.500"/><circle cx="18" cy="26" r="3.500"/><circle cx="28" cy="26" r="3.500"/></g><g fill="#e87712" stroke="#141414"><circle cx="8" cy="8" r="3.500"/><circle cx="18" cy="8" r="3.500"/><circle cx="8" cy="17" r="3.500"/><circle cx="18" cy="17" r="3.500"/></g></svg></button>
      </div>
      <div class="pgroup far">
       <button class="pb on" aria-label="Sound"><svg viewBox="0 0 36 34"><path d="M14 10L25 24L15 24L9 30L4 25L10 20z" fill="#141414"/><path d="M18 13Q22 15 23 20M19 9Q26 12 27 19M20 5Q30 9 31 18" fill="none" stroke="#141414" stroke-width="1.800"/></svg></button>
       <button class="pb on" aria-label="Scheme"><svg viewBox="0 0 36 34"><path d="M9 3H28V31H9z" fill="#141414"/><path d="M13 4h11v8H13zM13 14h11v8H13zM13 24h11v7H13z" fill="#c87a26"/><path d="M11 4V31M26 4V31" stroke="#c87a26" stroke-width="2" stroke-dasharray="2 2"/><path d="M35 27v6h-6z" fill="#0e0e0e"/></svg></button>
      </div>
     </section>

     <section class="xpresso">
      <div class="tabs" role="tablist"><button class="tab" role="tab">Materials</button><button class="tab active" role="tab" aria-selected="true">XPresso Editor</button></div>
      <div class="menubar x-menu">
       <button class="menu-btn" aria-label="Menu"><svg class="burger"><use href="#burger"/></svg></button>
       <button class="mi">File</button><button class="mi">Edit</button><button class="mi">Layout</button><button class="mi">View</button><button class="mi">Custom</button><button class="mi">Calculate</button>
      </div>
      <div class="x-body">
       <div class="splitter"><i class="grip grip-v"></i></div>
       <div class="x-main">
        <div class="xgroup">
         <div class="x-head"><i class="in"></i><h2>XGroup</h2><button class="mini" aria-label="Pan"><svg width="16" height="16"><use href="#m-move"/></svg></button><button class="mini" aria-label="Zoom"><svg width="16" height="16"><use href="#m-dolly"/></svg></button><i class="out"></i></div>
         <div class="canvas">
          <svg class="wires" aria-hidden="true"><g fill="none" stroke="#e88a22" stroke-width="1.500"><path d="M435 101C487 101 487 115 540 115"/><path d="M681 115.500L808 114.500"/><path d="M681 138C746 138 746 178 806 178"/></g></svg>
          <article class="node n1"><header><i class="in"></i><h3>Vertex Map</h3><i class="out"></i></header><div class="ports"><i></i><span class="r">Object</span><i class="port"></i></div></article>
          <article class="node n2"><header><i class="in"></i><h3>Vertex Map</h3><i class="out"></i></header><div class="ports"><i class="port"></i><span>Tag</span><span class="r">Value</span><i class="port"></i></div><div class="ports"><i class="port empty"></i><span>Index</span><span class="r">Count</span><i class="port"></i></div></article>
          <article class="node n3"><header><i class="in"></i><h3>Result</h3><i class="out"></i></header><div class="ports"><i class="port"></i><span class="c">0</span><i></i></div></article>
          <article class="node n4"><header><i class="in"></i><h3>Result</h3><i class="out"></i></header><div class="ports"><i class="port"></i><span class="c">10201</span><i></i></div></article>
         </div>
        </div>
       </div>
      </div>
     </section>
    </main>
   </div>
  </div>

  <aside class="right">
   <section class="dock objects">
    <div class="dock-main">
     <div class="menubar">
      <button class="menu-btn" aria-label="Menu"><svg class="burger"><use href="#burger"/></svg></button>
      <button class="mi">File</button><button class="mi">Edit</button><button class="mi">View</button><button class="mi">Object</button><button class="mi hot">Tags</button><button class="mi">Bookmarks</button>
      <div class="tools-right">
       <button class="mini" aria-label="Search"><svg width="20" height="22"><use href="#search"/></svg></button>
       <button class="mini" aria-label="Home"><svg width="22" height="22" viewBox="0 0 22 22"><path d="M1 11L11 1.500L21 11H17V20H5V11z" fill="none" stroke="currentColor" stroke-width="1.400"/></svg></button>
       <button class="mini" aria-label="Filter"><svg width="20" height="22"><use href="#funnel"/></svg></button>
       <button class="mini" aria-label="New panel"><svg width="18" height="22"><use href="#plus"/></svg></button>
      </div>
     </div>
     <div class="tree">
      <div class="row sel">
       <div class="name"><svg width="44" height="27" viewBox="0 0 44 27"><path d="M9.500 0V27M9.500 13.500H21" stroke="#777" fill="none"/><path d="M31 8L37 21H25z" fill="#6db8ff"/><g fill="#eee"><circle cx="31" cy="8" r="2"/><circle cx="24" cy="21" r="2"/><circle cx="38" cy="21" r="2"/></g></svg><span>Plane</span></div>
       <div class="flags"><svg width="16" height="16"><use href="#slot"/></svg><i class="dots"></i></div>
       <div class="tags">
        <svg width="24" height="24" viewBox="0 0 24 24"><rect x="1" y="1" width="22" height="22" fill="#3c3026" stroke="#f08a20" stroke-width="2"/><g fill="#e0822a"><circle cx="5" cy="5" r="1.800"/><circle cx="12" cy="5" r="1.800"/><circle cx="19" cy="5" r="1.800"/><circle cx="8.500" cy="8.500" r="2.600"/><circle cx="15.500" cy="8.500" r="2.600"/></g><g fill="#f2c79a"><circle cx="5" cy="12" r="1.800"/><circle cx="12" cy="12" r="1.800"/><circle cx="19" cy="12" r="1.800"/></g><g fill="#f5e6da"><circle cx="8.500" cy="15.500" r="2.600"/><circle cx="15.500" cy="15.500" r="2.600"/><circle cx="5" cy="19" r="1.800"/><circle cx="12" cy="19" r="1.800"/><circle cx="19" cy="19" r="1.800"/></g></svg>
        <svg width="22" height="22" viewBox="0 0 22 22"><circle cx="6" cy="6" r="5" fill="url(#gBall)"/><circle cx="15" cy="15" r="5.500" fill="url(#gBall)"/></svg>
        <svg width="20" height="20" viewBox="0 0 20 20"><rect x="1" y="1" width="18" height="18" fill="#111" stroke="#c87030" stroke-width="1.500"/><path d="M2.500 2.500h5v5h-5zM12.500 2.500h5v5h-5zM7.500 7.500h5v5h-5zM2.500 12.500h5v5h-5zM12.500 12.500h5v5h-5z" fill="#f2f2f2"/></svg>
       </div>
      </div>
      <div class="row">
       <div class="name"><svg width="44" height="27" viewBox="0 0 44 27"><path d="M9.500 0V13.500H21" stroke="#777" fill="none"/><path d="M25 6V21H38" fill="none" stroke="#eee" stroke-width="1.800"/><path d="M22.500 8L25 4L27.500 8zM36 18.500L40 21L36 23.500z" fill="#eee"/><circle cx="34" cy="11" r="5.500" fill="#b4d6ff" stroke="#222" stroke-width=".7"/></svg><span>Null</span></div>
       <div class="flags"><svg width="16" height="16"><use href="#slot"/></svg><i class="dots"></i></div>
       <div class="tags"><svg width="24" height="24" viewBox="0 0 24 24"><path d="M4 12H20M12 12L20 4M12 12L20 20" stroke="#111" stroke-width="1.300"/><path d="M2 10h4.500v4.500H2zM9.500 10H14v4.500H9.500zM17.500 10H22v4.500h-4.500zM17.500 2H22v4.500h-4.500zM17.500 18H22v4h-4.500z" fill="#7a92e6"/></svg></div>
      </div>
      <div class="rest"><div class="name"></div><div class="flags"></div></div>
     </div>
    </div>
    <div class="vtabs" role="tablist"><button class="vtab active" role="tab" aria-selected="true">Objects</button><button class="vtab" role="tab">Takes</button><button class="vtab" role="tab">Content Browser</button></div>
   </section>
   <section class="dock attrs">
    <div class="dock-main">
     <div class="menubar">
      <button class="menu-btn" aria-label="Menu"><svg class="burger"><use href="#burger"/></svg></button>
      <button class="mi">Mode</button><button class="mi">Edit</button><button class="mi">User Data</button>
      <div class="tools-right">
       <button class="mini" aria-label="Back"><svg width="22" height="22" viewBox="0 0 22 22"><path d="M21 11H2M9 4L2 11L9 18" fill="none" stroke="currentColor" stroke-width="2"/></svg></button>
       <button class="mini off" aria-label="Forward"><svg width="22" height="22" viewBox="0 0 22 22"><path d="M1 11H20M13 4L20 11L13 18" fill="none" stroke="currentColor" stroke-width="2"/></svg></button>
       <button class="mini" aria-label="Up"><svg width="22" height="22" viewBox="0 0 22 22"><path d="M11 22V2M4 9L11 2L18 9" fill="none" stroke="currentColor" stroke-width="2"/></svg></button>
       <button class="mini" aria-label="Search"><svg width="20" height="22"><use href="#search"/></svg></button>
       <button class="mini" aria-label="Filter"><svg width="20" height="22"><use href="#funnel"/></svg></button>
       <button class="mini" aria-label="Lock"><svg width="20" height="22" viewBox="0 0 20 22"><rect x="3" y="9.500" width="14" height="11" rx="1" fill="none" stroke="currentColor" stroke-width="1.300"/><path d="M6 7V5a4 4 0 0 1 8 0v4" fill="none" stroke="currentColor" stroke-width="1.300"/><circle cx="10" cy="15" r="2" fill="currentColor"/></svg></button>
       <button class="mini" aria-label="Target"><svg width="22" height="22" viewBox="0 0 22 22"><g fill="none" stroke="currentColor" stroke-width="1.300"><circle cx="11" cy="11" r="9.500"/><circle cx="11" cy="11" r="4.500"/></g><circle cx="11" cy="11" r="1.300" fill="currentColor"/></svg></button>
       <button class="mini" aria-label="New panel"><svg width="18" height="22"><use href="#plus"/></svg></button>
      </div>
     </div>
     <div class="attr-body">
      <h2 class="attr-title"><svg width="28" height="28" viewBox="0 0 28 28"><use href="#gear" x="0" y="10" width="18" height="18"/><use href="#gear" x="15" y="0" width="13" height="13"/></svg>Vertex Map Operator [Vertex Map]</h2>
      <div class="seg"><button>Basic</button><button class="active">Parameter</button></div>
      <h3>Parameter</h3>
      <div class="field"><input class="key" type="radio" id="key" checked aria-label="Index track"><label for="idx">Index</label><span class="num"><input id="idx" type="text" value="74"><svg class="spin"><use href="#spin"/></svg></span></div>
     </div>
    </div>
    <div class="vtabs" role="tablist"><button class="vtab active" role="tab" aria-selected="true">Attributes</button><button class="vtab" role="tab">Layers</button><button class="vtab" role="tab">Structure</button></div>
   </section>
  </aside>
 </div>
 <footer class="status"><button class="menu-btn" aria-label="Menu"><svg class="burger"><use href="#burger"/></svg></button><p>Live Selection: Click and drag to select elements. Hold down SHIFT to add to the selection, CTRL to remove.</p></footer>
</div>
</body>
</html>
```
FILE: styles.css
```css
:root {
  --bg: #2d2d2d;
  --deep: #252525;
  --line: #3a3a3a;
  --btn: #464646;
  --blue: #7594c6;
  --yellow: #cdd06c;
  --text: #c8c8c8;
  --dim: #6e6e6e;
  --icon: #808080;
}

* { box-sizing: border-box; }

body {
  margin: 0;
  background: var(--bg);
  color: var(--text);
  font: 15px/20px Inter, "Liberation Sans", sans-serif;
}

button, input { font: inherit; color: inherit; }
button { padding: 0; border: 0; background: none; }
h2, h3, p { margin: 0; font-size: 15px; font-weight: 400; }
svg { display: block; }
i { display: block; }
.defs { position: absolute; width: 0; height: 0; }

.app { display: flex; flex-direction: column; min-height: 100vh; border-top: 1px solid #0c0c0c; }
.work { display: flex; flex: 1; }
.left { display: flex; flex-direction: column; flex: 1; min-width: 0; }

/* Grips */
.grip { background: radial-gradient(#666 1px, transparent 1px) 0 0 / 4px 4px; flex: none; }
.grip-v { width: 8px; height: 44px; }
.grip-v.short { height: 24px; }
.grip-h { width: 40px; height: 7px; }

/* Tool buttons */
.toolbar { display: flex; gap: 5px; padding: 6px 0 5px; height: 56px; }
.toolbar .grip { margin-right: -1px; }
.toolbar .far { margin-left: 10px; }
.group, .col, .pgroup { display: flex; gap: 2px; flex: none; background: #393939; border-radius: 3px; overflow: hidden; }
.tool { width: 46px; height: 45px; background: var(--btn); flex: none; }
.tool svg { width: 46px; height: 45px; }
.tool.on, .pb.on { background: var(--blue); }
.tool.yellow, .pb.yellow { background: var(--yellow); }
.tool.outlined, .pb.outlined { box-shadow: inset 0 0 0 2px var(--yellow); }
.tool.dimmed { box-shadow: inset 0 0 0 2px #a5a658; }
.axis { font: 900 27px Inter, sans-serif; text-anchor: middle; fill: #121212; }
.psr { font: 900 14px Inter, sans-serif; text-anchor: middle; fill: #e8502c; }
.lit { color: #e8e8e8; }
.s-grey { color: #757575; }
.s-orange { color: #e87712; }
.s-white { color: #e2e2e2; }
.s-black { color: #131313; }

.stage { display: flex; flex: 1; }
.rail { display: flex; flex-direction: column; align-items: center; gap: 5px; width: 48px; flex: none; }
.col { flex-direction: column; }
.rail .far { margin-top: 10px; }
.rail .tool, .rail .tool svg { height: 46px; }

/* Centre column */
.center { display: flex; flex-direction: column; flex: 1; min-width: 0; padding: 0 4px 0 5px; }
.menubar { display: flex; align-items: center; gap: 19px; height: 30px; padding-left: 7px; }
.mi { padding-bottom: 2px; white-space: nowrap; color: var(--text); }
.hot { color: #d4d873; }
.menu-btn { color: #8c8c8c; margin-right: -7px; }
.menu-btn.bright { color: #e4e4e4; }
.burger { width: 20px; height: 14px; }
.tools-right { display: flex; align-items: center; gap: 6px; margin-left: auto; padding-right: 5px; }
.mini { color: var(--icon); }
.mini.off { color: #454545; }

.view { border: solid var(--line); border-width: 2px 1px 0; }
.view-menu { height: 29px; }
.view-menu .mi { padding-bottom: 4px; }
.view-nav { gap: 7px; padding-right: 2px; }
.viewport { position: relative; border: 2px solid #666; border-width: 2px 2px 2px 1px; overflow: hidden; }
.scene { width: 100%; aspect-ratio: 1312 / 546; }
.gizmo { font: 15px Inter, sans-serif; text-anchor: middle; }
.tag { position: absolute; display: flex; align-items: center; gap: 4px; padding: 0 4px; border-radius: 3px; background: #2b2b2b99; }
.tag-left { left: 1px; top: 3px; }
.tag-mid { left: 50%; top: 3px; transform: translateX(-50%); }
.tag-br { right: 14px; bottom: 4px; }

.timeline { display: flex; gap: 5px; height: 38px; }
.timeline .grip { margin-top: 9px; }
.ruler { position: relative; flex: 1; margin-right: 4px; }
.ticks { position: absolute; inset: 0; width: 100%; height: 36px; }
.labels { position: relative; z-index: 1; display: flex; justify-content: space-between; margin: 4px 18px 0 14px; }
.labels span { display: flex; justify-content: center; width: 0; color: #b4b4b4; }
.labels .now { justify-content: flex-start; width: 24px; margin-right: -24px; padding-left: 10px; color: var(--blue); }

.num { display: flex; align-items: center; flex: none; width: 111px; height: 24px; padding-right: 1px; border: 2px solid #363636; border-radius: 4px; background: var(--deep); }
.num input { flex: 1; min-width: 0; padding: 0 4px; border: 0; background: none; }
.spin { width: 10px; height: 16px; }
.cur { margin-top: 8px; }

.playback { display: flex; align-items: center; gap: 5px; height: 42px; }
.playback .far { margin-left: 11px; }
.range { display: flex; align-items: center; flex: 1; min-width: 0; margin: 0 4px; height: 24px; padding: 0 4px; border-radius: 3px; background: var(--btn); }
.range input { flex: 1; width: 50%; min-width: 0; padding: 0 8px; border: 0; background: none; }
.range .end { text-align: right; }
.bars { width: 6px; height: 14px; flex: none; border: solid #707070; border-width: 0 2px; }
.pb { width: 35px; height: 34px; background: var(--btn); }
.pb svg { width: 35px; height: 34px; }
.flip svg { transform: scaleX(-1); }

/* XPresso editor */
.xpresso { display: flex; flex-direction: column; flex: 1; margin: 0 -4px 4px -1px; border-bottom: 2px solid var(--line); }
.tabs { display: flex; height: 31px; background: var(--deep); border-bottom: 1px solid var(--line); }
.tab { padding: 0 7px; color: var(--dim); }
.tab.active { margin: 1px 0 -1px; border: 1px solid var(--line); border-bottom: 0; border-radius: 4px 4px 0 0; background: var(--bg); color: var(--text); }
.x-menu { height: 29px; border-bottom: 2px solid #363636; border-left: 2px solid var(--line); }
.x-body { display: flex; flex: 1; padding-top: 3px; border-left: 2px solid var(--line); }
.splitter { display: flex; align-items: center; justify-content: center; width: 13px; border: 2px solid #363636; }
.splitter .grip { height: 68px; }
.x-main { flex: 1; padding: 4px 7px 24px 4px; }
.xgroup { height: 100%; border: solid #4d4f51; border-width: 0 14px; border-radius: 4px 4px 2px 2px; display: flex; flex-direction: column; box-shadow: 0 2px 0 #383838; }
.x-head { display: flex; align-items: center; gap: 4px; height: 22px; margin: 0 -14px; background: #4d4f51; border-radius: 4px 4px 0 0; overflow: hidden; }
.x-head h2 { flex: 1; text-align: center; color: #fff; }
.x-head .mini { color: #fff; }
.in, .out { width: 14px; height: 22px; background: #2b5da3; flex: none; }
.out { background: #bc4d53; }
.canvas {
  position: relative; flex: 1; border-left: 2px solid var(--bg); border-top: 1px solid var(--bg);
  background:
    repeating-linear-gradient(90deg, #3d3d3d 0 1px, transparent 1px 43px, #3d3d3d 43px 44px, transparent 44px 85px, #3d3d3d 85px 86px, transparent 86px 128px),
    repeating-linear-gradient(#3d3d3d 0 1px, transparent 1px 43px, #3d3d3d 43px 44px, transparent 44px 85px, #3d3d3d 85px 86px, transparent 86px 128px),
    #323232;
}
.wires { position: absolute; inset: 0; width: 100%; height: 100%; }
.node { position: absolute; border-radius: 4px; background: #393939; overflow: hidden; box-shadow: 0 0 0 1px #262626; }
.node header { display: flex; height: 22px; background: #4d4f51; }
.node h3 { flex: 1; text-align: center; color: #fff; }
.ports { display: flex; height: 21px; color: #b4b4b4; }
.ports > i { width: 14px; background: #4d4f51; flex: none; }
.ports span { flex: 1; padding: 0 6px; line-height: 18px; }
.ports .r { text-align: right; }
.ports .c { padding: 0; text-align: center; }
.ports .port { background: radial-gradient(circle at 50% 10px, #c8c8c8 3px, #777 4px, #777 6px, #4d4f51 7px); }
.ports .empty { background: radial-gradient(circle at 50% 10px, #4d4f51 4px, #777 5px, #777 6px, #4d4f51 7px); }
.n1 { left: 262px; top: 67px; width: 172px; }
.n2 { left: 541px; top: 76px; width: 141px; border: 1px solid #e88a22; padding-bottom: 5px; }
.n2 .ports { height: 24px; }
.n2 .ports span { line-height: 24px; }
.n2 .port { background: radial-gradient(circle at 50% 13px, #c8c8c8 3px, #777 4px, #777 6px, #4d4f51 7px); }
.n2 .empty { background: radial-gradient(circle at 50% 13px, #4d4f51 4px, #777 5px, #777 6px, #4d4f51 7px); }
.n3 { left: 809px; top: 81px; width: 79px; }
.n4 { left: 807px; top: 145px; width: 79px; }

/* Right docks */
.right { display: flex; flex-direction: column; gap: 4px; width: 548px; padding-top: 4px; flex: none; }
.dock { display: flex; }
.objects { flex: none; height: 555px; }
.attrs { flex: 1; }
.dock-main { display: flex; flex-direction: column; flex: 1; min-width: 0; border: solid var(--line); border-width: 2px 0 0 2px; }
.dock .menubar { border-bottom: 2px solid #363636; }
.objects .dock-main { border-bottom: 2px solid var(--line); }
.tree { display: flex; flex-direction: column; flex: 1; padding-top: 2px; border-right: 2px solid #383838; margin-right: 2px; }
.row { display: flex; height: 27px; }
.row.sel { background: #3b3b3b; }
.row.sel .name { color: #f7b51e; }
.name { display: flex; align-items: center; width: 94px; border-right: 1px solid #3f3f3f; }
.name svg { margin-right: 3px; }
.flags { display: flex; align-items: center; gap: 6px; width: 53px; padding-left: 4px; border-right: 2px solid #444; }
.dots { width: 8px; height: 20px; background: radial-gradient(#828282 3px, transparent 4px) 0 0 / 8px 10px; }
.tags { display: flex; align-items: center; gap: 5px; }
.rest { display: flex; flex: 1; }
.vtabs { display: flex; flex-direction: column; width: 29px; background: var(--deep); }
.vtab { writing-mode: vertical-rl; width: 28px; padding: 8px 0; color: var(--dim); }
.vtab.active { padding: 6px 0; border: 2px solid #383838; border-left: 0; border-radius: 0 4px 4px 0; background: var(--bg); color: var(--text); }

.attr-body { display: flex; flex-direction: column; align-items: flex-start; padding: 4px 4px 0; }
.attr-title { display: flex; align-items: center; gap: 5px; height: 28px; }
.attr-title svg { color: #828282; }
.seg { display: flex; gap: 1px; margin-top: 5px; border-radius: 3px; overflow: hidden; }
.seg button { width: 81px; height: 24px; background: var(--btn); }
.seg .active { background: var(--blue); color: #111; }
.attr-body h3 { margin: 8px 0 7px; color: #e6e6e6; font-weight: 700; }
.field { display: flex; align-items: center; }
.field label { margin: 0 8px 0 9px; }
.key { appearance: none; width: 20px; height: 20px; margin: 0; border-radius: 50%; background: radial-gradient(#8c8c8c 5px, #2a2a2a 6px, #2a2a2a 7px, #6a6a6a 8px); }

.status { display: flex; align-items: center; gap: 13px; height: 34px; padding: 0 0 1px 7px; border-top: 2px solid #363636; }
.status .menu-btn { margin: 0; }
```
